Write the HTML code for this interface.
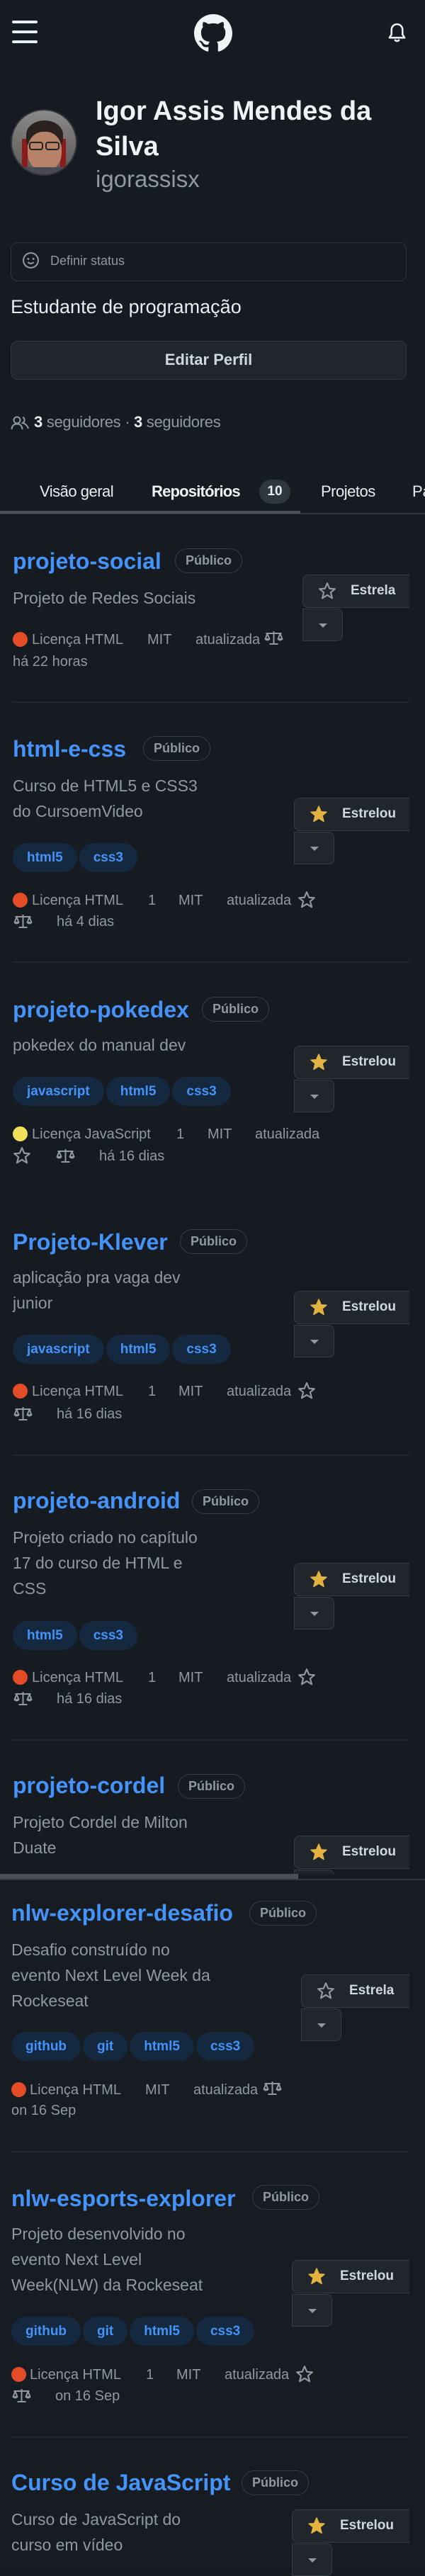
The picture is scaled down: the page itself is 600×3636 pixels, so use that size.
<!DOCTYPE html>
<html><head><meta charset="utf-8"><style>
*{margin:0;padding:0;box-sizing:border-box}
body{width:600px;height:3621px;background:#161a21;position:relative;overflow:hidden;font-family:"Liberation Sans",Arial,sans-serif;color:#e6edf3}
.a{position:absolute}
.t{position:absolute;left:18px;font:bold 32px/1 "Liberation Sans",sans-serif;color:#4493f8;white-space:nowrap}
.b{position:absolute;width:95px;height:35px;border:1.5px solid #363c45;border-radius:18px;font:bold 18px/32px "Liberation Sans",sans-serif;color:#9198a1;text-align:center}
.d{position:absolute;left:18px;font:23px/36px "Liberation Sans",sans-serif;color:#9198a1;white-space:nowrap}
.btn{position:absolute;height:47px;background:#21262d;border:1.5px solid #363c45;border-right:none;border-radius:8px 0 0 8px;right:22px}
.btn svg{position:absolute;left:21px;top:9px}
.btn span{position:absolute;left:67px;top:12px;font:bold 19px/1 "Liberation Sans",sans-serif;color:#d1d7e0}
.dd{position:absolute;width:57px;height:46px;background:#21262d;border:1.5px solid #363c45;border-radius:0 8px 8px 0}
.dd:after{content:"";position:absolute;left:22px;top:20px;border-left:6px solid transparent;border-right:6px solid transparent;border-top:6px solid #9198a1}
.tags{position:absolute;left:18px;display:flex;gap:3px}
.tag{height:41px;border-radius:21px;background:#142840;color:#4493f8;font:bold 19px/41px "Liberation Sans",sans-serif;padding:0 20px}
.m{position:absolute;font:20px/1 "Liberation Sans",sans-serif;color:#9198a1;white-space:nowrap}
.dot{position:absolute;width:21px;height:21px;border-radius:50%;background:#e34c26;left:18px}
.sep{position:absolute;left:18px;width:560px;height:2px;background:#22272e}
</style></head><body>
<svg width="0" height="0" style="position:absolute"><defs>
<g id="so"><polygon points="12,2 15,9 22,9.5 16.5,14 18.5,21.5 12,17.5 5.5,21.5 7.5,14 2,9.5 9,9" fill="none" stroke="#9198a1" stroke-width="2" stroke-linejoin="round"/></g>
<g id="sf"><polygon points="12,2 15,9 22,9.5 16.5,14 18.5,21.5 12,17.5 5.5,21.5 7.5,14 2,9.5 9,9" fill="#e3b341" stroke="#e3b341" stroke-width="1.5" stroke-linejoin="round"/></g>
<g id="law" fill="none" stroke="#9198a1" stroke-width="2" stroke-linejoin="round"><path d="M3 6H25M14 3V21M8 21H20M2 14L5 6.5L8 14ZM20 14L23 6.5L26 14Z"/><path d="M2 14Q5 17 8 14M20 14Q23 17 26 14"/></g>
</defs></svg>

<div class="a" style="left:17px;top:29px;width:36px;height:4px;background:#e6edf3;border-radius:2px"></div>
<div class="a" style="left:17px;top:43px;width:36px;height:4px;background:#e6edf3;border-radius:2px"></div>
<div class="a" style="left:17px;top:57px;width:36px;height:4px;background:#e6edf3;border-radius:2px"></div>
<svg class="a" style="left:273px;top:20px" width="56" height="54" viewBox="0 0 16 16"><path fill="#f0f3f6" d="M8 0c4.420 0 8 3.58 8 8a8.013 8.013 0 0 1-5.45 7.59c-.4.08-.55-.17-.55-.38 0-.27.01-1.13.01-2.2 0-.75-.25-1.23-.54-1.48 1.78-.2 3.65-.88 3.65-3.95 0-.88-.31-1.59-.82-2.15.08-.2.36-1.02-.08-2.12 0 0-.67-.22-2.2.82-.64-.18-1.32-.27-2-.27-.68 0-1.36.09-2 .27-1.53-1.03-2.2-.82-2.2-.82-.44 1.1-.16 1.92-.08 2.12-.51.56-.82 1.28-.82 2.15 0 3.06 1.86 3.75 3.64 3.95-.23.2-.44.55-.51 1.07-.46.21-1.61.55-2.33-.66-.15-.24-.6-.83-1.23-.82-.67.01-.27.38.01.53.34.19.73.9.82 1.130.16.45.68 1.31 2.69.94 0 .67.01 1.3.01 1.49 0 .21-.15.45-.55.38A7.995 7.995 0 0 1 0 8c0-4.42 3.58-8 8-8Z"/></svg>
<svg class="a" style="left:547px;top:32px" width="27" height="29" viewBox="0 0 24 26"><path d="M12 2C7.5 2 5 5.5 5 9.5V15L2.5 19H21.5L19 15V9.5C19 5.5 16.5 2 12 2Z" fill="none" stroke="#e6edf3" stroke-width="2.3" stroke-linejoin="round"/><path d="M9 21.5Q12 25 15 21.5" fill="none" stroke="#e6edf3" stroke-width="2.3"/></svg>

<div class="a" style="left:15px;top:154px;width:94px;height:94px;border-radius:50%;border:2px solid #30363d;overflow:hidden;background:linear-gradient(#8a8a88,#5a5654)">
<div class="a" style="left:14px;top:40px;width:8px;height:40px;background:#8a1c1c"></div>
<div class="a" style="left:68px;top:40px;width:8px;height:40px;background:#8a1c1c"></div>
<div class="a" style="left:20px;top:14px;width:52px;height:40px;border-radius:50% 50% 30% 30%;background:#2b2220"></div>
<div class="a" style="left:22px;top:30px;width:48px;height:55px;border-radius:45%;background:#b68369"></div>
<div class="a" style="left:24px;top:44px;width:20px;height:12px;border:2px solid #222;border-radius:4px"></div>
<div class="a" style="left:47px;top:44px;width:20px;height:12px;border:2px solid #222;border-radius:4px"></div>
<div class="a" style="left:10px;top:80px;width:74px;height:20px;background:#4a4a52"></div>
</div>
<div class="a" style="left:135px;top:132px;width:440px;font:bold 38px/50px 'Liberation Sans',sans-serif;color:#f0f3f6">Igor Assis Mendes da Silva</div>
<div class="a" style="left:135px;top:236px;font:33px/1 'Liberation Sans',sans-serif;color:#9198a1">igorassisx</div>

<div class="a" style="left:15px;top:342px;width:559px;height:55px;border:1.5px solid #30363d;border-radius:10px"></div>
<svg class="a" style="left:30px;top:355px" width="27" height="25" viewBox="0 0 24 24"><circle cx="12" cy="12" r="10" fill="none" stroke="#9198a1" stroke-width="2"/><circle cx="8.5" cy="10" r="1.4" fill="#9198a1"/><circle cx="15.5" cy="10" r="1.4" fill="#9198a1"/><path d="M8 14.5Q12 18 16 14.5" fill="none" stroke="#9198a1" stroke-width="2"/></svg>
<div class="a" style="left:71px;top:359px;font:18px/1 'Liberation Sans',sans-serif;color:#9198a1">Definir status</div>
<div class="a" style="left:15px;top:420px;font:27px/1 'Liberation Sans',sans-serif;color:#e6edf3">Estudante de programação</div>
<div class="a" style="left:15px;top:481px;width:559px;height:55px;background:#21262d;border:1.5px solid #30363d;border-radius:10px;text-align:center;font:bold 22px/52px 'Liberation Sans',sans-serif;color:#d1d7e0">Editar Perfil</div>

<svg class="a" style="left:15px;top:587px" width="27" height="20" viewBox="0 0 27 20"><circle cx="9" cy="6" r="4.5" fill="none" stroke="#9198a1" stroke-width="2"/><path d="M1.5 19Q2 11.5 9 11.5Q16 11.5 16.5 19" fill="none" stroke="#9198a1" stroke-width="2"/><path d="M17 2Q20 3 19.5 7Q19 9 17 10Q23 11.5 25 18" fill="none" stroke="#9198a1" stroke-width="2"/></svg>
<div class="a" style="left:48px;top:585px;font:22px/1 'Liberation Sans',sans-serif;color:#9198a1;letter-spacing:-0.3px"><b style="color:#e6edf3">3</b> seguidores · <b style="color:#e6edf3">3</b> seguidores</div>

<div class="a" style="left:56px;top:683px;font:22px/1 'Liberation Sans',sans-serif;color:#e6edf3;letter-spacing:-0.5px">Visão geral</div>
<div class="a" style="left:214px;top:683px;font:bold 22px/1 'Liberation Sans',sans-serif;color:#f0f3f6;letter-spacing:-0.8px">Repositórios</div>
<div class="a" style="left:366px;top:677px;width:44px;height:34px;border-radius:17px;background:#30363d;font:bold 19px/34px 'Liberation Sans',sans-serif;text-align:center;color:#e6edf3">10</div>
<div class="a" style="left:453px;top:683px;font:22px/1 'Liberation Sans',sans-serif;color:#e6edf3;letter-spacing:-0.5px">Projetos</div>
<div class="a" style="left:582px;top:683px;font:22px/1 'Liberation Sans',sans-serif;color:#e6edf3">Pa</div>
<div class="a" style="left:0;top:724px;width:600px;height:1.5px;background:#30363d"></div>
<div class="a" style="left:0;top:721px;width:424px;height:4px;background:#4b5056"></div>

<div class="t" style="top:776px">projeto-social</div>
<div class="b" style="left:247px;top:774px">Público</div>
<div class="d" style="top:826px">Projeto de Redes Sociais</div>
<div class="btn" style="left:427px;top:811px"><svg width="26" height="26" viewBox="0 0 24 24"><use href="#so"/></svg><span>Estrela</span></div>
<div class="dd" style="left:427px;top:859px"></div>
<div class="dot" style="top:892px"></div>
<div class="m" style="left:45px;top:893px">Licença HTML</div><div class="m" style="left:208px;top:893px">MIT</div><div class="m" style="left:276px;top:893px">atualizada</div>
<svg class="a" style="left:372px;top:888px" width="29" height="24" viewBox="0 0 28 24"><use href="#law"/></svg>
<div class="m" style="left:18px;top:924px">há 22 horas</div>
<div class="sep" style="top:990px"></div>

<div class="t" style="top:1041px">html-e-css</div>
<div class="b" style="left:202px;top:1039px">Público</div>
<div class="d" style="top:1091px">Curso de HTML5 e CSS3<br>do CursoemVideo</div>
<div class="btn" style="left:415px;top:1126px"><svg width="26" height="26" viewBox="0 0 24 24"><use href="#sf"/></svg><span>Estrelou</span></div>
<div class="dd" style="left:415px;top:1174px"></div>
<div class="tags" style="top:1190px"><div class="tag">html5</div><div class="tag">css3</div></div>
<div class="dot" style="top:1260px"></div>
<div class="m" style="left:45px;top:1261px">Licença HTML</div><div class="m" style="left:209px;top:1261px">1</div><div class="m" style="left:252px;top:1261px">MIT</div><div class="m" style="left:320px;top:1261px">atualizada</div>
<svg class="a" style="left:420px;top:1257px" width="26" height="26" viewBox="0 0 24 24"><use href="#so"/></svg>
<svg class="a" style="left:18px;top:1288px" width="29" height="24" viewBox="0 0 28 24"><use href="#law"/></svg>
<div class="m" style="left:80px;top:1291px">há 4 dias</div>
<div class="sep" style="top:1357px"></div>

<div class="t" style="top:1409px">projeto-pokedex</div>
<div class="b" style="left:285px;top:1407px">Público</div>
<div class="d" style="top:1457px">pokedex do manual dev</div>
<div class="btn" style="left:415px;top:1476px"><svg width="26" height="26" viewBox="0 0 24 24"><use href="#sf"/></svg><span>Estrelou</span></div>
<div class="dd" style="left:415px;top:1524px"></div>
<div class="tags" style="top:1520px"><div class="tag">javascript</div><div class="tag">html5</div><div class="tag">css3</div></div>
<div class="dot" style="top:1590px;background:#f1e05a"></div>
<div class="m" style="left:45px;top:1591px">Licença JavaScript</div><div class="m" style="left:249px;top:1591px">1</div><div class="m" style="left:293px;top:1591px">MIT</div><div class="m" style="left:360px;top:1591px">atualizada</div>
<svg class="a" style="left:18px;top:1618px" width="26" height="26" viewBox="0 0 24 24"><use href="#so"/></svg>
<svg class="a" style="left:78px;top:1619px" width="29" height="24" viewBox="0 0 28 24"><use href="#law"/></svg>
<div class="m" style="left:140px;top:1622px">há 16 dias</div>

<div class="t" style="top:1737px">Projeto-Klever</div>
<div class="b" style="left:254px;top:1735px">Público</div>
<div class="d" style="top:1785px">aplicação pra vaga dev<br>junior</div>
<div class="btn" style="left:415px;top:1822px"><svg width="26" height="26" viewBox="0 0 24 24"><use href="#sf"/></svg><span>Estrelou</span></div>
<div class="dd" style="left:415px;top:1870px"></div>
<div class="tags" style="top:1884px"><div class="tag">javascript</div><div class="tag">html5</div><div class="tag">css3</div></div>
<div class="dot" style="top:1953px"></div>
<div class="m" style="left:45px;top:1954px">Licença HTML</div><div class="m" style="left:209px;top:1954px">1</div><div class="m" style="left:252px;top:1954px">MIT</div><div class="m" style="left:320px;top:1954px">atualizada</div>
<svg class="a" style="left:420px;top:1950px" width="26" height="26" viewBox="0 0 24 24"><use href="#so"/></svg>
<svg class="a" style="left:18px;top:1983px" width="29" height="24" viewBox="0 0 28 24"><use href="#law"/></svg>
<div class="m" style="left:80px;top:1986px">há 16 dias</div>
<div class="sep" style="top:2053px"></div>

<div class="t" style="top:2102px">projeto-android</div>
<div class="b" style="left:271px;top:2102px">Público</div>
<div class="d" style="top:2152px">Projeto criado no capítulo<br>17 do curso de HTML e<br>CSS</div>
<div class="btn" style="left:415px;top:2206px"><svg width="26" height="26" viewBox="0 0 24 24"><use href="#sf"/></svg><span>Estrelou</span></div>
<div class="dd" style="left:415px;top:2254px"></div>
<div class="tags" style="top:2288px"><div class="tag">html5</div><div class="tag">css3</div></div>
<div class="dot" style="top:2357px"></div>
<div class="m" style="left:45px;top:2358px">Licença HTML</div><div class="m" style="left:209px;top:2358px">1</div><div class="m" style="left:252px;top:2358px">MIT</div><div class="m" style="left:320px;top:2358px">atualizada</div>
<svg class="a" style="left:420px;top:2354px" width="26" height="26" viewBox="0 0 24 24"><use href="#so"/></svg>
<svg class="a" style="left:18px;top:2385px" width="29" height="24" viewBox="0 0 28 24"><use href="#law"/></svg>
<div class="m" style="left:80px;top:2388px">há 16 dias</div>
<div class="sep" style="top:2455px"></div>

<div class="t" style="top:2504px">projeto-cordel</div>
<div class="b" style="left:251px;top:2504px">Público</div>
<div class="d" style="top:2554px">Projeto Cordel de Milton<br>Duate</div>
<div class="btn" style="left:415px;top:2591px"><svg width="26" height="26" viewBox="0 0 24 24"><use href="#sf"/></svg><span>Estrelou</span></div>
<div class="a" style="left:415px;top:2639px;width:57px;height:8px;background:#21262d;border:1.5px solid #363c45;border-bottom:none;border-radius:0 8px 0 0"></div>
<div class="a" style="left:0;top:2645px;width:600px;height:976px;background:#171b22"></div>
<div class="a" style="left:0;top:2645px;width:421px;height:8px;background:#4b5056"></div>
<div class="a" style="left:0;top:2652px;width:600px;height:1.5px;background:#30363d"></div>

<div class="t" style="top:2684px;left:16px">nlw-explorer-desafio</div>
<div class="b" style="left:352px;top:2683px">Público</div>
<div class="d" style="top:2734px;left:16px">Desafio construído no<br>evento Next Level Week da<br>Rockeseat</div>
<div class="btn" style="left:425px;top:2787px"><svg width="26" height="26" viewBox="0 0 24 24"><use href="#so"/></svg><span>Estrela</span></div>
<div class="dd" style="left:425px;top:2835px"></div>
<div class="tags" style="top:2868px;left:16px"><div class="tag">github</div><div class="tag">git</div><div class="tag">html5</div><div class="tag">css3</div></div>
<div class="dot" style="top:2939px;left:16px"></div>
<div class="m" style="left:42px;top:2940px">Licença HTML</div><div class="m" style="left:205px;top:2940px">MIT</div><div class="m" style="left:273px;top:2940px">atualizada</div>
<svg class="a" style="left:370px;top:2935px" width="29" height="24" viewBox="0 0 28 24"><use href="#law"/></svg>
<div class="m" style="left:16px;top:2969px">on 16 Sep</div>
<div class="sep" style="top:3036px;left:16px"></div>

<div class="t" style="top:3087px;left:16px">nlw-esports-explorer</div>
<div class="b" style="left:356px;top:3084px">Público</div>
<div class="d" style="top:3135px;left:16px">Projeto desenvolvido no<br>evento Next Level<br>Week(NLW) da Rockeseat</div>
<div class="btn" style="left:412px;top:3190px"><svg width="26" height="26" viewBox="0 0 24 24"><use href="#sf"/></svg><span>Estrelou</span></div>
<div class="dd" style="left:412px;top:3238px"></div>
<div class="tags" style="top:3270px;left:16px"><div class="tag">github</div><div class="tag">git</div><div class="tag">html5</div><div class="tag">css3</div></div>
<div class="dot" style="top:3341px;left:16px"></div>
<div class="m" style="left:42px;top:3342px">Licença HTML</div><div class="m" style="left:206px;top:3342px">1</div><div class="m" style="left:249px;top:3342px">MIT</div><div class="m" style="left:317px;top:3342px">atualizada</div>
<svg class="a" style="left:417px;top:3338px" width="26" height="26" viewBox="0 0 24 24"><use href="#so"/></svg>
<svg class="a" style="left:16px;top:3369px" width="29" height="24" viewBox="0 0 28 24"><use href="#law"/></svg>
<div class="m" style="left:78px;top:3372px">on 16 Sep</div>
<div class="sep" style="top:3439px;left:16px"></div>

<div class="t" style="top:3488px;left:16px">Curso de JavaScript</div>
<div class="b" style="left:341px;top:3487px">Público</div>
<div class="d" style="top:3538px;left:16px">Curso de JavaScript do<br>curso em vídeo</div>
<div class="btn" style="left:412px;top:3542px"><svg width="26" height="26" viewBox="0 0 24 24"><use href="#sf"/></svg><span>Estrelou</span></div>
<div class="dd" style="left:412px;top:3590px"></div>
</body></html>
